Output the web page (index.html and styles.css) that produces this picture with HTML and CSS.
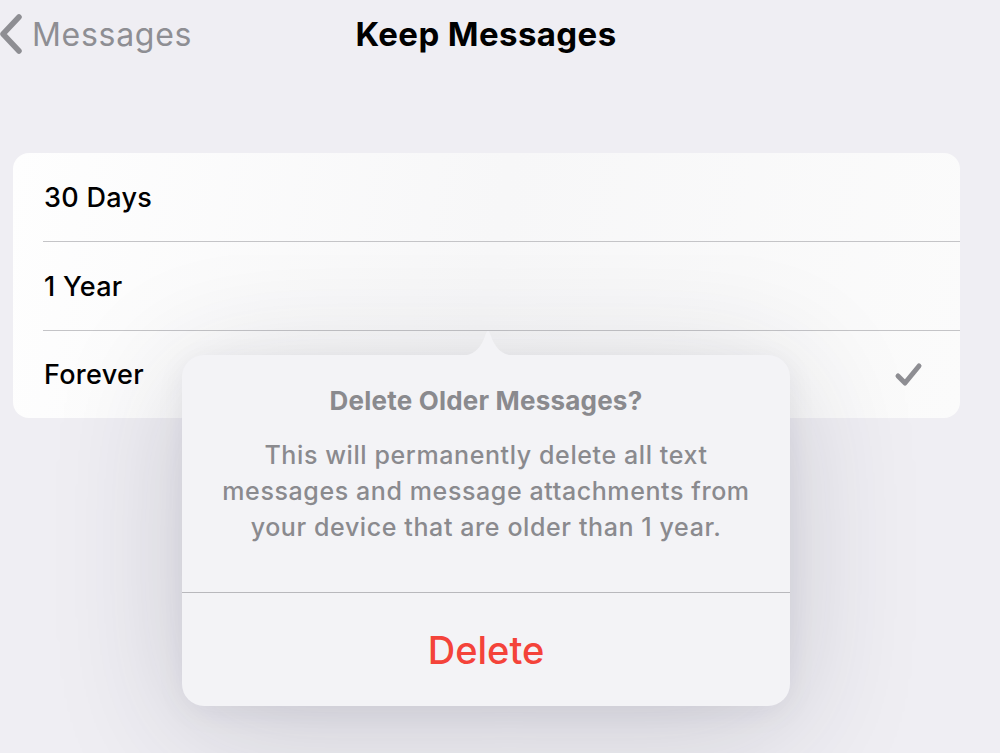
FILE: index.html
```html
<!DOCTYPE html>
<html lang="en">
<head>
    <meta charset="UTF-8">
    <meta name="viewport" content="width=device-width, initial-scale=1.0">
    <title>Keep Messages</title>
    <link rel="stylesheet" href="styles.css">
</head>
<body>
    <header class="nav-bar">
        <a href="#" class="back-link">
            <svg class="back-chevron" width="24" height="42" viewBox="0 0 24 42">
                <path d="M20 4 L4 21 L20 38" fill="none" stroke="#8e8e93" stroke-width="5.5" stroke-linecap="round" stroke-linejoin="round"/>
            </svg>
            <span>Messages</span>
        </a>
        <h1 class="nav-title">Keep Messages</h1>
        <div></div>
    </header>

    <main class="content">
        <div class="options-card">
            <div class="option-row"><span>30 Days</span></div>
            <div class="option-row"><span>1 Year</span></div>
            <div class="option-row">
                <span>Forever</span>
                <svg class="check" width="30" height="26" viewBox="0 0 30 26">
                    <path d="M4 14 L11 21 L25 4" fill="none" stroke="#8e8e93" stroke-width="5" stroke-linecap="round" stroke-linejoin="round"/>
                </svg>
            </div>
        </div>

        <div class="popover">
            <svg class="popover-arrow" width="64" height="27" viewBox="0 0 64 27">
                <path d="M0 27 C14 27 20 24 26 14 C29 9 30 2 32 2 C34 2 35 9 38 14 C44 24 50 27 64 27 Z" fill="#f3f3f6"/>
            </svg>
            <div class="popover-body">
                <h2 class="popover-title">Delete Older Messages?</h2>
                <p class="popover-message">This will permanently delete all text messages and message attachments from your device that are older than 1 year.</p>
            </div>
            <button class="btn-delete">Delete</button>
        </div>
    </main>
</body>
</html>
```

FILE: styles.css
```css
body {
    margin: 0;
    font-family: Inter, "Noto Sans", sans-serif;
    background-color: #efeef3;
    width: 1000px;
    height: 753px;
    overflow: hidden;
}
.nav-bar {
    display: grid;
    grid-template-columns: 1fr auto 1fr;
    align-items: center;
    width: 972px;
    height: 68px;
}
.back-link {
    display: flex;
    align-items: center;
    gap: 9px;
    color: #8e8e93;
    text-decoration: none;
    font-size: 32px;
    letter-spacing: 0.7px;
}
.back-chevron {
    margin-left: -1px;
}
.nav-title {
    margin: 0;
    font-size: 33px;
    font-weight: 700;
    letter-spacing: 0.4px;
    color: #000;
}
.content {
    position: relative;
    padding: 85px 40px 0 13px;
}
.options-card {
    background: linear-gradient(100deg, #fefefe 0%, #f7f7f8 50%, #fbfbfb 100%);
    border-radius: 16px;
    overflow: hidden;
}
.option-row {
    display: flex;
    align-items: center;
    justify-content: space-between;
    height: 88px;
    margin-left: 30px;
    padding: 0 36px 0 1px;
    border-bottom: 1px solid #c4c4c7;
    font-size: 27px;
    font-weight: 500;
    letter-spacing: 0.3px;
    color: #000;
}
.option-row:last-child {
    border-bottom: none;
    height: 87px;
}
.popover {
    position: absolute;
    left: 182px;
    top: 287px;
    width: 608px;
    height: 351px;
    background-color: #f3f3f6;
    border-radius: 22px;
    box-shadow: 0 20px 130px rgba(40, 40, 60, 0.18), 0 6px 30px rgba(40, 40, 60, 0.06);
    display: flex;
    flex-direction: column;
    text-align: center;
}
.popover-arrow {
    position: absolute;
    left: 274px;
    top: -26px;
}
.popover-body {
    padding: 30px 28px 0;
    height: 207px;
    border-bottom: 1px solid #b8b8bc;
}
.popover-title {
    margin: 0;
    font-size: 26px;
    font-weight: 700;
    color: #8a8a8e;
    letter-spacing: 0.2px;
}
.popover-message {
    margin: 21px 0 0;
    font-size: 25px;
    line-height: 36px;
    font-weight: 500;
    color: #8a8a8e;
    letter-spacing: 0.6px;
}
.btn-delete {
    flex: 1;
    background: none;
    border: none;
    font-family: inherit;
    font-size: 38px;
    font-weight: 500;
    color: #f4433a;
    cursor: pointer;
    padding: 0;
}
```
